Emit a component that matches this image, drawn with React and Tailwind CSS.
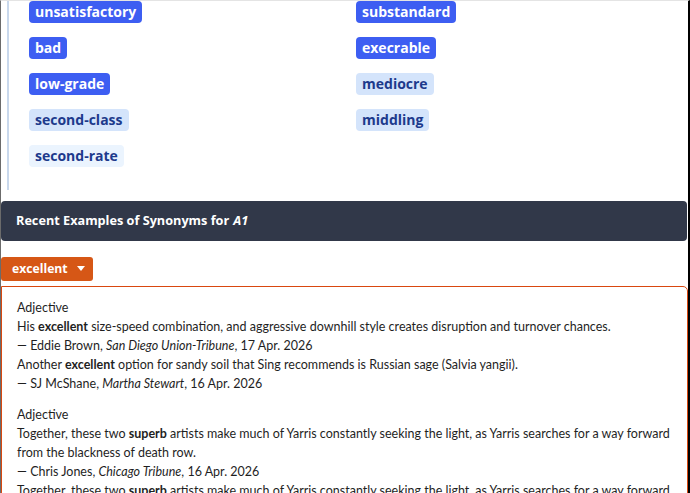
const synonyms = [
  ['unsatisfactory', 'strong'],
  ['substandard', 'strong'],
  ['bad', 'strong'],
  ['execrable', 'strong'],
  ['low-grade', 'strong'],
  ['mediocre', 'mid'],
  ['second-class', 'mid'],
  ['middling', 'mid'],
  ['second-rate', 'weak'],
];

const chipStyles = {
  strong: 'bg-[#3d5ef2] text-white',
  mid: 'bg-[#d4e4fb] text-[#1d3a8c]',
  weak: 'bg-[#ebf4fe] text-[#1d3a8c]',
};

const examples = [
  {
    pos: 'Adjective',
    items: [
      {
        before: 'His ',
        word: 'excellent',
        after: ' size-speed combination, and aggressive downhill style creates disruption and turnover chances.',
        author: 'Eddie Brown',
        source: 'San Diego Union-Tribune',
        date: '17 Apr. 2026',
      },
      {
        before: 'Another ',
        word: 'excellent',
        after: ' option for sandy soil that Sing recommends is Russian sage (Salvia yangii).',
        author: 'SJ McShane',
        source: 'Martha Stewart',
        date: '16 Apr. 2026',
      },
    ],
  },
  {
    pos: 'Adjective',
    items: [
      {
        before: 'Together, these two ',
        word: 'superb',
        after: ' artists make much of Yarris constantly seeking the light, as Yarris searches for a way forward from the blackness of death row.',
        author: 'Chris Jones',
        source: 'Chicago Tribune',
        date: '16 Apr. 2026',
      },
      {
        before: 'Together, these two ',
        word: 'superb',
        after: ' artists make much of Yarris constantly seeking the light, as Yarris searches for a way forward from the blackness of death row.',
        author: 'Chris Jones',
        source: 'Chicago Tribune',
        date: '16 Apr. 2026',
      },
    ],
  },
];

export default function App() {
  return (
    <div className="h-[493px] overflow-hidden bg-white border-t border-t-[#e4e4e4] border-l border-l-[#6b6b6b] border-r-2 border-r-black font-['Open_Sans',sans-serif]">
      {/* synonym chips */}
      <div className="ml-[6px] border-l-2 border-[#c9d8ec] pl-5 pb-[23px]">
        <div className="grid grid-cols-[327px_1fr] gap-y-[14px]">
          {synonyms.map(([word, tone]) => (
            <span
              key={word}
              className={`justify-self-start h-[22px] leading-[22px] px-[6px] rounded-[4px] text-[14px] font-bold ${chipStyles[tone]}`}
            >
              {word}
            </span>
          ))}
        </div>
      </div>

      {/* examples header */}
      <div className="mt-[11px] mr-[1px] h-10 bg-[#313849] rounded-[4px] flex items-center px-[15px] text-white text-[12.7px] font-bold">
        Recent Examples of Synonyms for <i className="ml-1">A1</i>
      </div>

      <button className="mt-4 h-6 w-[92px] bg-[#d65716] rounded-[3px] text-white text-[12.2px] font-bold flex items-center pl-[11px] gap-[9px]">
        excellent
        <svg width="8" height="6" viewBox="0 0 8 6"><path d="M0 0h8L4 5z" fill="white" /></svg>
      </button>

      <div className="mt-[5px] border border-[#d9480f] rounded-tr-[5px] pt-[11px] pl-[15px] pr-1 font-['Lato',sans-serif] text-[12.5px] leading-[19px] text-[#1f1f1f]">
        {examples.map((group, gi) => (
          <div key={gi} className="mb-[12px]">
            <div>{group.pos}</div>
            {group.items.map((ex, i) => (
              <div key={i}>
                <div>
                  {ex.before}
                  <b>{ex.word}</b>
                  {ex.after}
                </div>
                <div>
                  — {ex.author}, <i>{ex.source}</i>, {ex.date}
                </div>
              </div>
            ))}
          </div>
        ))}
      </div>
    </div>
  );
}
